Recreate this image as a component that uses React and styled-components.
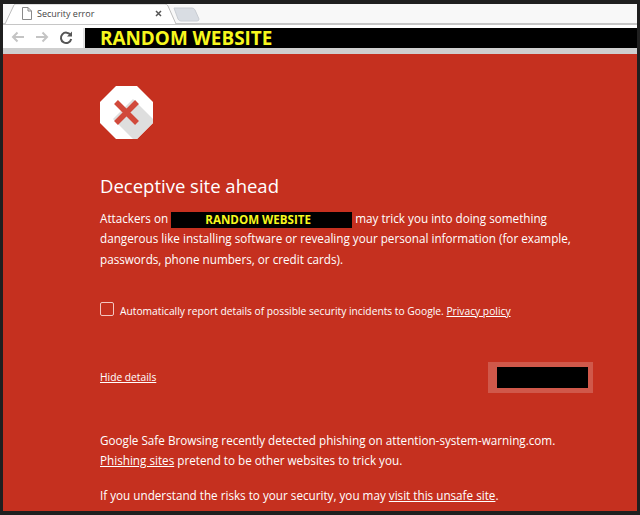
import React from 'react'
import styled, { createGlobalStyle } from 'styled-components'

const GlobalStyle = createGlobalStyle`
  html, body {
    margin: 0;
    padding: 0;
    background: #1f1f1f;
  }
`

const Frame = styled.div`
  width: 640px;
  height: 515px;
  box-sizing: border-box;
  padding: 4px 3px 4px 3px;
  display: flex;
  flex-direction: column;
  overflow: hidden;
  font-family: "Open Sans", "Noto Sans", sans-serif;
`
const TabStrip = styled.div`
  height: 21px;
  box-sizing: border-box;
  flex: none;
  background: #f8f8f8;
  border-bottom: 2px solid #c6c6c6;
  display: flex;
  align-items: flex-start;
  position: relative;
`
const TabShape = styled.svg`
  position: absolute;
  left: 0;
  top: 0;
`
const TabContent = styled.div`
  position: relative;
  width: 168px;
  height: 19px;
  box-sizing: border-box;
  padding: 0 9px 0 19px;
  display: flex;
  align-items: center;
  flex: none;
`
const TabTitle = styled.span`
  font-size: 9px;
  color: #444;
  margin-left: 5px;
  flex: 1;
`
const TabClose = styled.svg`
  display: block;
`
const Toolbar = styled.div`
  height: 29px;
  box-sizing: border-box;
  flex: none;
  background: #fff;
  padding: 3px 0 0 8px;
  display: flex;
  align-items: flex-start;
  border-bottom: 6px solid #cfcfcf;
`
const NavIcon = styled.svg`
  flex: none;
  display: block;
  margin: 3px 10px 0 0;
`
const Omnibox = styled.div`
  flex: 1;
  height: 20px;
  padding-left: 15px;
  background: #000;
  color: #f7f71d;
  font-size: 18.9px;
  font-weight: 700;
  line-height: 20px;
  border-left: 2px solid #e4e4e4;
`
const Page = styled.div`
  flex: 1;
  background: #c5301f;
  color: #fff;
  padding: 32px 44px 0 97px;
`
const Shield = styled.svg`
  display: block;
`
const Title = styled.h1`
  margin: 32px 0 0;
  font-size: 18.5px;
  line-height: 30px;
  font-weight: 400;
`
const Paragraph = styled.p`
  margin: ${p => p.$top || 0}px 0 0;
  font-size: 11.7px;
  line-height: 20.3px;
  white-space: pre-line;
`
const Redacted = styled.span`
  display: inline-block;
  width: 181px;
  height: 16px;
  box-sizing: border-box;
  padding-right: 7px;
  background: #000;
  color: #f7f71d;
  font-size: 11.6px;
  font-weight: 700;
  line-height: 15px;
  text-align: center;
  vertical-align: -1px;
`
const ReportRow = styled.div`
  margin-top: 33px;
  display: flex;
  align-items: center;
  height: 18px;
  font-size: 10.25px;
`
const Checkbox = styled.span`
  width: 12px;
  height: 12px;
  margin: 0 6px 4px 0;
  flex: none;
  border: 1px solid #f3c6c0;
  border-radius: 2px;
`
const Link = styled.a`
  color: #fff;
  text-decoration: underline;
`
const DetailsRow = styled.div`
  margin-top: 42px;
  display: flex;
  align-items: center;
  justify-content: space-between;
  font-size: 10.25px;
`
const ProceedButton = styled.div`
  width: 91px;
  height: 21px;
  border: solid #d0584a;
  border-width: 5px 5px 5px 9px;
`
const ButtonFace = styled.div`
  width: 100%;
  height: 100%;
  background: #000;
`

const App = () => {
  return (
    <Frame>
      <GlobalStyle />
      <TabStrip>
        <TabShape width="200" height="20" viewBox="0 0 200 20">
          <path d="M2 20 L11 1 Q11.500 0 13 0 L162 0 Q164 0 165 2 L173 20" fill="#fff" stroke="#bdbdbd" />
          <path d="M171 4 L189 4 Q191 4 192 6 L196 15 Q196 17 194 17 L178 17 Q176 17 175 15 Z" fill="#d9dde3" stroke="#c8ccd2" />
        </TabShape>
        <TabContent>
          <svg width="10" height="13" viewBox="0 0 10 13">
            <path d="M.5.500 H6 L9.500 4 V12.500 H.5 Z M6 .500 V4 H9.500" fill="#fff" stroke="#8a8a8a" />
          </svg>
          <TabTitle>Security error</TabTitle>
          <TabClose width="7" height="7" viewBox="0 0 7 7">
            <path d="M1 1 L6 6 M6 1 L1 6" stroke="#555" strokeWidth="1.500" />
          </TabClose>
        </TabContent>
      </TabStrip>
      <Toolbar>
        <NavIcon width="14" height="12" viewBox="0 0 14 12">
          <path d="M13 6 H2 M6.500 1.500 L2 6 L6.500 10.500" fill="none" stroke="#c4c4c4" strokeWidth="2" />
        </NavIcon>
        <NavIcon width="14" height="12" viewBox="0 0 14 12">
          <path d="M1 6 H12 M7.500 1.500 L12 6 L7.500 10.500" fill="none" stroke="#c4c4c4" strokeWidth="2" />
        </NavIcon>
        <NavIcon width="14" height="14" viewBox="0 0 14 14">
          <path d="M11.500 4 A5.200 5.200 0 1 0 12.200 8" fill="none" stroke="#555" strokeWidth="2" />
          <path d="M8 5.500 H13 V.5 Z" fill="#555" />
        </NavIcon>
        <Omnibox>RANDOM WEBSITE</Omnibox>
      </Toolbar>
      <Page>
        <Shield width="53" height="53" viewBox="0 0 53 53">
          <path d="M16 0 H37 L53 16 V37 L37 53 H16 L0 37 V16 Z" fill="#fff" />
          <path d="M33 13 L53 33 V37 L37 53 H33 L13 33 Z" fill="#dedede" />
          <path d="M16 16 L37 37 M37 16 L16 37" stroke="#d1493b" strokeWidth="5.500" />
        </Shield>
        <Title>Deceptive site ahead</Title>
        <Paragraph $top={7}>
          Attackers on <Redacted>RANDOM WEBSITE</Redacted> may trick you into doing something{'\n'}
          dangerous like installing software or revealing your personal information (for example,{'\n'}
          passwords, phone numbers, or credit cards).
        </Paragraph>
        <ReportRow>
          <Checkbox />
          <span>Automatically report details of possible security incidents to Google. <Link>Privacy policy</Link></span>
        </ReportRow>
        <DetailsRow>
          <Link>Hide details</Link>
          <ProceedButton><ButtonFace /></ProceedButton>
        </DetailsRow>
        <Paragraph $top={37}>
          Google Safe Browsing recently detected phishing on attention-system-warning.com.{'\n'}
          <Link>Phishing sites</Link> pretend to be other websites to trick you.
        </Paragraph>
        <Paragraph $top={15}>
          If you understand the risks to your security, you may <Link>visit this unsafe site</Link>.
        </Paragraph>
      </Page>
    </Frame>
  )
}

export default App
